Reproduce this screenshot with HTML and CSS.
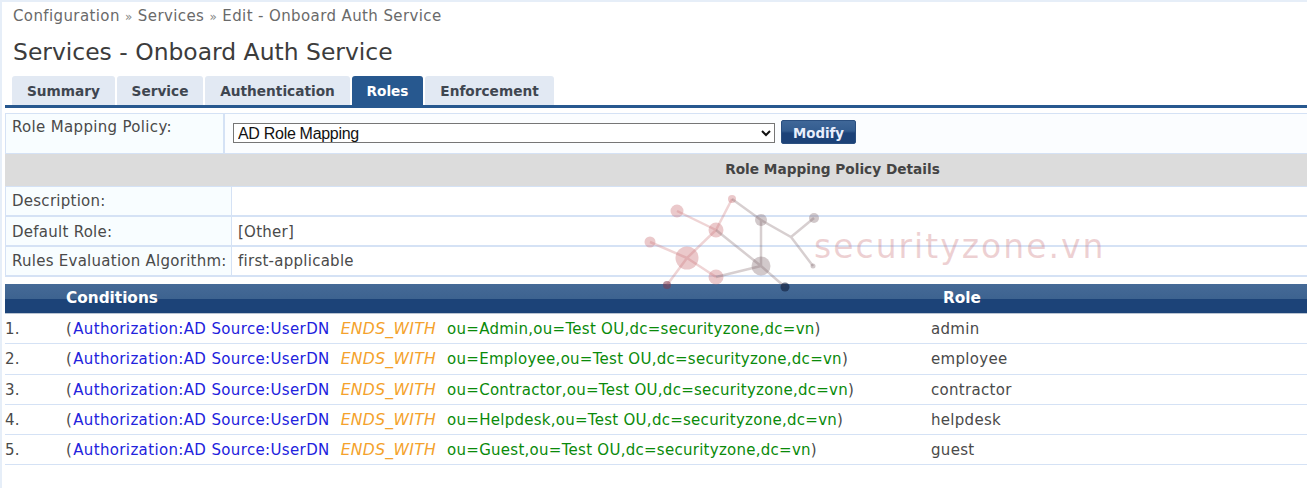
FILE: index.html
```html
<!DOCTYPE html>
<html lang="en">
<head>
<meta charset="utf-8">
<title>Services - Onboard Auth Service</title>
<link rel="stylesheet" href="styles.css">
</head>
<body>
<div class="page">
  <div class="crumbs">Configuration <span class="sep">»</span> Services <span class="sep">»</span> Edit - Onboard Auth Service</div>
  <h1 class="title">Services - Onboard Auth Service</h1>
  <div class="tabs">
    <div class="tab t1">Summary</div>
    <div class="tab t2">Service</div>
    <div class="tab t3">Authentication</div>
    <div class="tab active t4">Roles</div>
    <div class="tab t5">Enforcement</div>
  </div>
  <div class="policy">
    <div class="policy-label">Role Mapping Policy:</div>
    <div class="policy-value">
      <select class="select"><option>AD Role Mapping</option></select>
      <button class="btn">Modify</button>
    </div>
  </div>
  <div class="details-head">Role Mapping Policy Details</div>
  <div class="kv r1"><div class="k">Description:</div><div class="v"></div></div>
  <div class="kv r2"><div class="k">Default Role:</div><div class="v">[Other]</div></div>
  <div class="kv r3"><div class="k">Rules Evaluation Algorithm:</div><div class="v">first-applicable</div></div>
  <div class="rules-head"><div class="hc">Conditions</div><div class="hr">Role</div></div>
  <div class="rule"><div class="n">1.</div><div class="c">(<span class="attr">Authorization:AD Source:UserDN</span><span class="op">ENDS_WITH</span><span class="val">ou=Admin,ou=Test OU,dc=securityzone,dc=vn</span>)</div><div class="role">admin</div></div>
  <div class="rule"><div class="n">2.</div><div class="c">(<span class="attr">Authorization:AD Source:UserDN</span><span class="op">ENDS_WITH</span><span class="val">ou=Employee,ou=Test OU,dc=securityzone,dc=vn</span>)</div><div class="role">employee</div></div>
  <div class="rule"><div class="n">3.</div><div class="c">(<span class="attr">Authorization:AD Source:UserDN</span><span class="op">ENDS_WITH</span><span class="val">ou=Contractor,ou=Test OU,dc=securityzone,dc=vn</span>)</div><div class="role">contractor</div></div>
  <div class="rule"><div class="n">4.</div><div class="c">(<span class="attr">Authorization:AD Source:UserDN</span><span class="op">ENDS_WITH</span><span class="val">ou=Helpdesk,ou=Test OU,dc=securityzone,dc=vn</span>)</div><div class="role">helpdesk</div></div>
  <div class="rule"><div class="n">5.</div><div class="c">(<span class="attr">Authorization:AD Source:UserDN</span><span class="op">ENDS_WITH</span><span class="val">ou=Guest,ou=Test OU,dc=securityzone,dc=vn</span>)</div><div class="role">guest</div></div>
  <div class="watermark">
    <svg class="wm-svg" width="185" height="110" viewBox="0 0 185 110">
      <g class="wm-red">
        <path d="M35 13 74 32M8 44 45 60M45 60 74 32M45 60 25 87M45 60 74 79M74 32 90 1"/>
        <circle cx="35" cy="13" r="6.5"/><circle cx="8" cy="44" r="5.5"/><circle cx="45" cy="60" r="11.5"/><circle cx="74" cy="32" r="7.5"/><circle cx="74" cy="79" r="7.5"/><circle cx="90" cy="1" r="4"/>
      </g>
      <g class="wm-grey">
        <path d="M74 79 119 68M119 68 74 32M119 68V22M90 1 119 22 149 39 172 20M149 39 171 68M119 68 143 89"/>
        <circle cx="119" cy="22" r="6"/><circle cx="172" cy="20" r="5"/><circle cx="119" cy="68" r="9.5"/><circle cx="171" cy="68" r="2.5"/>
      </g>
      <circle class="wm-dark" cx="25" cy="87" r="4"/>
      <circle class="wm-dark2" cx="143" cy="89" r="4.5"/>
    </svg>
    <div class="wm-text">securityzone.vn</div>
  </div>
</div>
</body>
</html>
```
FILE: styles.css
```css
* { box-sizing: border-box; }
html, body { margin: 0; padding: 0; height: 100%; background: #fff; overflow: hidden; }
body {
  font-family: "DejaVu Sans", sans-serif;
  font-size: 15px;
  letter-spacing: .33px;
  color: #4a4a4a;
}
.page {
  position: relative;
  height: 488px;
  border-top: 2px solid #e6eef8;
  border-left: 2px solid #e6eef8;
}
.crumbs { height: 26px; padding: 5px 0 0 11px; line-height: 18px; letter-spacing: .39px; color: #6a6a6a; }
.sep { font-size: 12px; color: #888; }
.title { margin: 0; height: 48px; padding: 10px 0 0 11px; font-weight: 400; font-size: 23.45px; letter-spacing: 0; line-height: 28px; color: #3c3c3c; }
.tabs { display: flex; height: 29px; gap: 2px; padding-left: 10px; }
.tab {
  background: #e2e9f3;
  border-radius: 3px 3px 0 0;
  font-weight: 700;
  font-size: 13.7px;
  letter-spacing: 0;
  line-height: 30px;
  text-align: center;
  color: #3f4650;
}
.t1 { width: 103px; }
.t2 { width: 86px; }
.t3 { width: 145px; }
.t4 { width: 71px; }
.t5 { width: 129px; }
.tab.active { background: #27588f; color: #fff; }
.policy {
  display: flex;
  height: 49px;
  margin-left: 3px;
  border-top: 3px solid #27588f;
  padding-top: 5px;
}
.policy-label {
  width: 220px;
  background: #f8fdff;
  border: 1px solid #d5e2f5;
  border-right: 2px solid #d5e2f5;
  padding: 4px 0 0 6px;
  line-height: 18px;
}
.policy-value {
  flex: 1;
  display: flex;
  align-items: flex-start;
  gap: 6px;
  padding: 9px 0 0 8px;
  border-top: 1px solid #d5e2f5;
  border-bottom: 1px solid #d5e2f5;
  background: #fbfdff;
}
.select {
  width: 542px;
  height: 20px;
  font-family: "Liberation Sans", sans-serif;
  font-size: 16px;
  letter-spacing: -0.3px;
  color: #111;
  background: #fff;
  border: 1px solid #767676;
  padding: 0;
}
.btn {
  width: 75px;
  height: 24px;
  margin-top: -3px;
  border: 1px solid #2a4f80;
  border-radius: 2px;
  background: linear-gradient(#3f6798 0%, #335c8f 45%, #1c4278 55%, #1c4278 100%);
  color: #e8eefc;
  font-family: "DejaVu Sans Condensed", "DejaVu Sans", sans-serif;
  font-stretch: condensed;
  font-weight: 700;
  font-size: 14.8px;
  letter-spacing: 0;
  padding: 0;
}
.details-head {
  margin-left: 3px;
  height: 33px;
  background: #dcdcdc;
  border-bottom: 1px solid #d5e2f5;
  text-align: center;
  font-weight: 700;
  font-size: 13.7px;
  letter-spacing: 0;
  line-height: 31px;
  padding-left: 353px;
  color: #444;
}
.kv { margin-left: 3px; display: flex; border-bottom: 2px solid #d5e2f5; border-left: 1px solid #d5e2f5; height: 30px; letter-spacing: .26px; }
.k { width: 226px; padding: 5px 0 0 6px; background: #f8fdff; border-right: 1px solid #d5e2f5; line-height: 18px; white-space: nowrap; }
.v { flex: 1; padding: 5px 0 0 6px; line-height: 18px; }
.r2 .k, .r2 .v { padding-top: 6px; }
.rules-head {
  margin: 7px 0 0 3px;
  height: 30px;
  display: flex;
  background: linear-gradient(#456a97 0%, #3d6390 50%, #1c4378 52%, #1c4378 100%);
  color: #fff;
  font-weight: 700;
  font-size: 15.3px;
  letter-spacing: 0;
  line-height: 28px;
  border-bottom: 1px solid #b9c4d2;
}
.hc { width: 938px; padding-left: 61px; }
.rule {
  margin-left: 3px;
  height: 30.25px;
  display: flex;
  border-bottom: 1px solid #d5e2f5;
  line-height: 30px;
  white-space: nowrap;
}
.n { width: 61px; }
.c { width: 865px; }
.attr { color: #2222dd; margin-left: 1px; letter-spacing: .36px; }
.op { color: #f4a22c; font-style: italic; font-size: 15.6px; margin-left: 11px; }
.val { color: #0a8a0a; margin-left: 11px; letter-spacing: .27px; }
.role { letter-spacing: .3px; }
.watermark {
  position: absolute;
  left: 640px;
  top: 196px;
  width: 470px;
  height: 110px;
  pointer-events: none;
}
.wm-svg { position: absolute; left: 0; top: 0; overflow: visible; }
.wm-red path { stroke: rgba(205,120,125,.32); stroke-width: 2.5; fill: none; }
.wm-red circle { fill: rgba(205,120,125,.4); }
.wm-grey path { stroke: rgba(130,105,110,.32); stroke-width: 2.5; fill: none; }
.wm-grey circle { fill: rgba(130,105,110,.36); }
.wm-dark { fill: rgba(130,60,80,.55); }
.wm-dark2 { fill: rgba(15,30,60,.6); }
.wm-text {
  position: absolute;
  left: 172px;
  top: 29px;
  font-size: 33px;
  line-height: 40px;
  letter-spacing: 2px;
  color: rgba(205,120,125,.34);
  white-space: nowrap;
}
```
